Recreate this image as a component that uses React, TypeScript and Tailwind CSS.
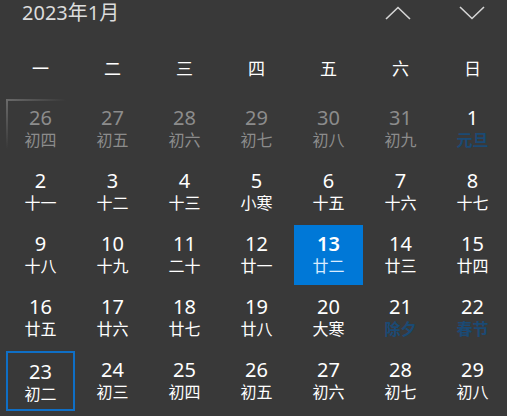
import React from 'react';

type Day = { d: number; l: string; muted?: boolean; holiday?: boolean; selected?: boolean; today?: boolean };

const WEEK = ['一', '二', '三', '四', '五', '六', '日'];

const DAYS: Day[] = [
  { d: 26, l: '初四', muted: true },
  { d: 27, l: '初五', muted: true },
  { d: 28, l: '初六', muted: true },
  { d: 29, l: '初七', muted: true },
  { d: 30, l: '初八', muted: true },
  { d: 31, l: '初九', muted: true },
  { d: 1, l: '元旦', holiday: true },
  { d: 2, l: '十一' },
  { d: 3, l: '十二' },
  { d: 4, l: '十三' },
  { d: 5, l: '小寒' },
  { d: 6, l: '十五' },
  { d: 7, l: '十六' },
  { d: 8, l: '十七' },
  { d: 9, l: '十八' },
  { d: 10, l: '十九' },
  { d: 11, l: '二十' },
  { d: 12, l: '廿一' },
  { d: 13, l: '廿二', selected: true },
  { d: 14, l: '廿三' },
  { d: 15, l: '廿四' },
  { d: 16, l: '廿五' },
  { d: 17, l: '廿六' },
  { d: 18, l: '廿七' },
  { d: 19, l: '廿八' },
  { d: 20, l: '大寒' },
  { d: 21, l: '除夕', holiday: true },
  { d: 22, l: '春节', holiday: true },
  { d: 23, l: '初二', today: true },
  { d: 24, l: '初三' },
  { d: 25, l: '初四' },
  { d: 26, l: '初五' },
  { d: 27, l: '初六' },
  { d: 28, l: '初七' },
  { d: 29, l: '初八' },
];

function DayCell({ day, first }: { day: Day; first: boolean }) {
  let box = 'relative flex h-[60px] flex-col items-center pt-[6px]';
  if (day.selected) box += ' bg-[#0078d7]';
  if (day.today) box += ' border-2 border-[#0f6fc6] pt-[4px]';

  let num = 'text-[20px] leading-[25px]';
  let lunar = 'text-[16px] leading-[20px]';
  if (day.muted) {
    num += ' text-[#8c8c8c]';
    lunar += ' text-[#8c8c8c]';
  } else if (day.selected) {
    num += ' font-semibold text-white';
    lunar += ' text-[#d8ecff]';
  } else {
    num += ' text-white';
    lunar += day.holiday ? ' font-semibold text-[#1b4a74]' : ' text-white';
  }

  return (
    <div className={box}>
      {first && (
        <>
          <div className="absolute left-0 top-0 h-[2px] w-[60px] bg-gradient-to-r from-[#6a6a6a] to-transparent" />
          <div className="absolute left-0 top-0 h-[50px] w-[2px] bg-gradient-to-b from-[#6a6a6a] to-transparent" />
        </>
      )}
      <span className={num}>{day.d}</span>
      <span className={lunar}>{day.l}</span>
    </div>
  );
}

export default function App() {
  return (
    <div
      className="h-[416px] w-[507px] overflow-hidden bg-[#393939] text-white"
      style={{ fontFamily: '"Noto Sans", "Noto Sans CJK SC", sans-serif' }}
    >
      {/* 标题栏 */}
      <div className="flex h-[26px] items-center justify-between pl-[22px] pr-[22px]">
        <span className="text-[20px] leading-[24px] text-[#dcdcdc]">2023年1月</span>
        <div className="flex items-center gap-[48px]">
          <svg width="26" height="14" viewBox="0 0 26 14" fill="none" stroke="#d6d6d6" strokeWidth="1.6">
            <path d="M1 13 L13 1.5 L25 13" />
          </svg>
          <svg width="26" height="14" viewBox="0 0 26 14" fill="none" stroke="#d6d6d6" strokeWidth="1.6">
            <path d="M1 1 L13 12.5 L25 1" />
          </svg>
        </div>
      </div>

      {/* 星期 */}
      <div className="mt-[32px] grid grid-cols-7 gap-[3px] pl-[6px]">
        {WEEK.map((w) => (
          <div key={w} className="text-center text-[17px] leading-[22px] text-white">
            {w}
          </div>
        ))}
      </div>

      {/* 日期 */}
      <div className="mt-[19px] grid grid-cols-7 gap-[3px] pl-[6px]">
        {DAYS.map((day, i) => (
          <DayCell key={i} day={day} first={i === 0} />
        ))}
      </div>
    </div>
  );
}
